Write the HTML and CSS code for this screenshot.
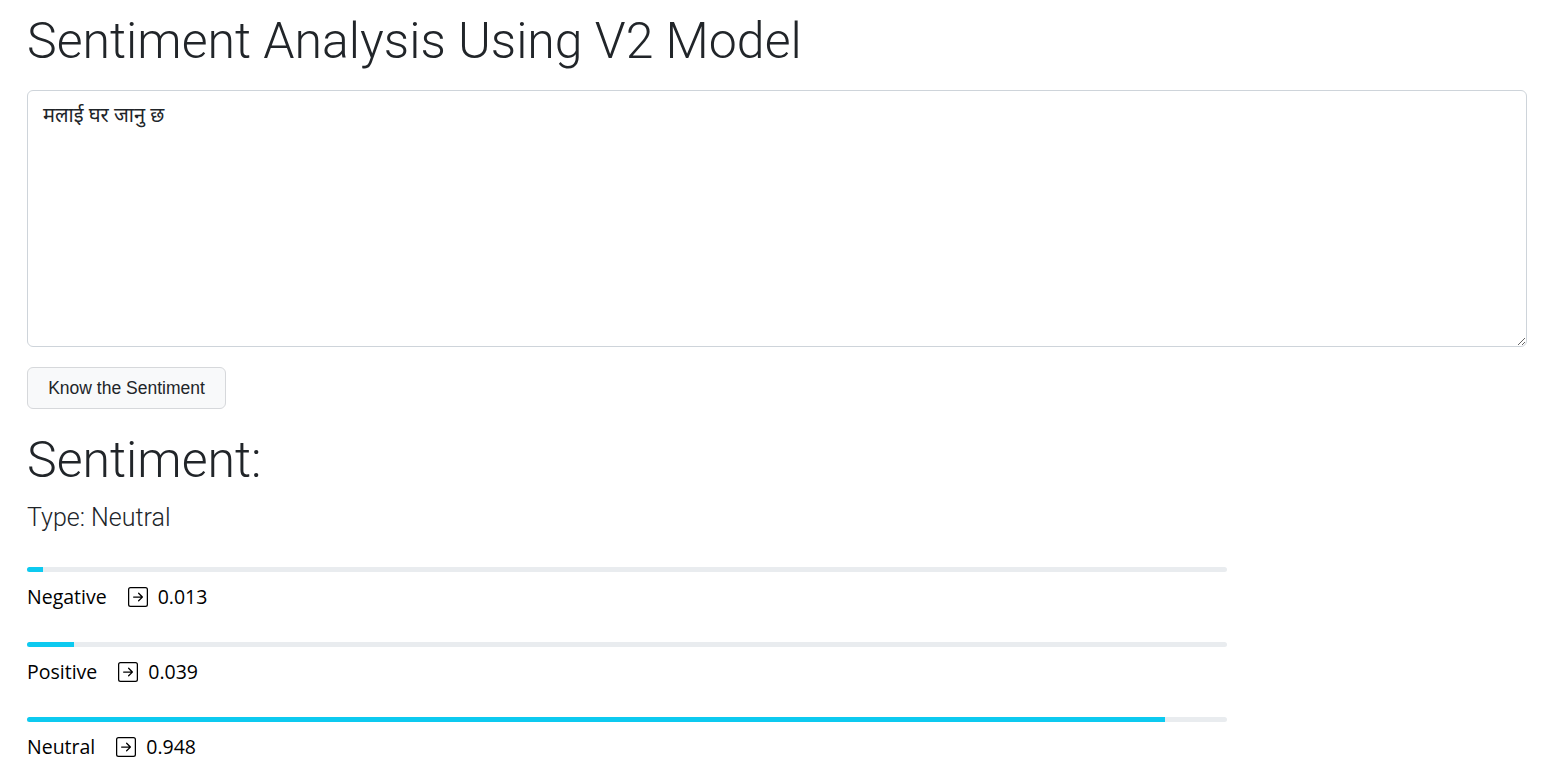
FILE: index.html
```html
<!DOCTYPE html>
<html>
<head>
<meta charset="utf-8">
<link rel="stylesheet" href="styles.css">
</head>
<body>
<div class="page">
  <h1 class="title">Sentiment Analysis Using V2 Model</h1>
  <textarea class="input">मलाई घर जानु छ</textarea>
  <div class="actions"><button class="btn">Know the Sentiment</button></div>
  <h2 class="result-title">Sentiment:</h2>
  <p class="lead">Type: Neutral</p>
  <div class="scores">
    <div class="score">
      <div class="bar"><div class="fill" style="width:1.3%"></div></div>
      <div class="label"><span class="name">Negative</span>
        <svg class="icon" viewBox="0 0 16 16"><path fill="currentColor" fill-rule="evenodd" d="M15 2a1 1 0 0 0-1-1H2a1 1 0 0 0-1 1v12a1 1 0 0 0 1 1h12a1 1 0 0 0 1-1V2zM0 2a2 2 0 0 1 2-2h12a2 2 0 0 1 2 2v12a2 2 0 0 1-2 2H2a2 2 0 0 1-2-2V2zm4.5 5.5a.5.5 0 0 0 0 1h5.793l-2.147 2.146a.5.5 0 0 0 .708.708l3-3a.5.5 0 0 0 0-.708l-3-3a.5.5 0 1 0-.708.708L10.293 7.5H4.5z"/></svg>
        <span class="val">0.013</span></div>
    </div>
    <div class="score">
      <div class="bar"><div class="fill" style="width:3.9%"></div></div>
      <div class="label"><span class="name">Positive</span>
        <svg class="icon" viewBox="0 0 16 16"><path fill="currentColor" fill-rule="evenodd" d="M15 2a1 1 0 0 0-1-1H2a1 1 0 0 0-1 1v12a1 1 0 0 0 1 1h12a1 1 0 0 0 1-1V2zM0 2a2 2 0 0 1 2-2h12a2 2 0 0 1 2 2v12a2 2 0 0 1-2 2H2a2 2 0 0 1-2-2V2zm4.5 5.5a.5.5 0 0 0 0 1h5.793l-2.147 2.146a.5.5 0 0 0 .708.708l3-3a.5.5 0 0 0 0-.708l-3-3a.5.5 0 1 0-.708.708L10.293 7.5H4.5z"/></svg>
        <span class="val">0.039</span></div>
    </div>
    <div class="score">
      <div class="bar"><div class="fill" style="width:94.8%"></div></div>
      <div class="label"><span class="name">Neutral</span>
        <svg class="icon" viewBox="0 0 16 16"><path fill="currentColor" fill-rule="evenodd" d="M15 2a1 1 0 0 0-1-1H2a1 1 0 0 0-1 1v12a1 1 0 0 0 1 1h12a1 1 0 0 0 1-1V2zM0 2a2 2 0 0 1 2-2h12a2 2 0 0 1 2 2v12a2 2 0 0 1-2 2H2a2 2 0 0 1-2-2V2zm4.5 5.5a.5.5 0 0 0 0 1h5.793l-2.147 2.146a.5.5 0 0 0 .708.708l3-3a.5.5 0 0 0 0-.708l-3-3a.5.5 0 1 0-.708.708L10.293 7.5H4.5z"/></svg>
        <span class="val">0.948</span></div>
    </div>
  </div>
</div>
</body>
</html>
```
FILE: styles.css
```css
* { box-sizing: border-box; }
html, body { margin: 0; padding: 0; background: #fff; }
body { font-family: Roboto, "Noto Sans", sans-serif; color: #212529; }
.page { padding: 0 26px 0 27px; display: flex; flex-direction: column; }
.title {
  font-family: Roboto, sans-serif; font-weight: 300; font-size: 50px;
  line-height: 1.2; margin: 11px 0 19px; color: #212529;
}
.input {
  display: block; width: 100%; height: 257px; resize: vertical;
  border: 1px solid #ced4da; border-radius: 6px; padding: 10px 15px;
  font-family: "Noto Sans", "Noto Sans Devanagari", sans-serif; font-size: 20px; line-height: 1.4;
  color: #212529; background: #fff; outline: none;
}
.actions { margin-top: 20px; }
.btn {
  font-family: "Liberation Sans", Arial, sans-serif; font-size: 17.5px; color: #212529;
  background: #f8f9fa; border: 1px solid #d6d8db; border-radius: 6px;
  height: 42px; padding: 0; width: 199px;
}
.result-title {
  font-family: Roboto, sans-serif; font-weight: 300; font-size: 50px; line-height: 1.2;
  margin: 21px 0 0;
}
.lead { font-family: Roboto, sans-serif; font-weight: 300; font-size: 25px; margin: 9px 0 0; line-height: 1.5; }
.scores { width: 1200px; margin-top: 30px; display: flex; flex-direction: column; gap: 20px; }
.score { display: flex; flex-direction: column; }
.bar { height: 5px; background: #e9ecef; border-radius: 3px; overflow: hidden; }
.fill { height: 100%; background: #0dcaf0; }
.label {
  display: flex; align-items: center; height: 50px;
  font-family: "Open Sans", "Noto Sans", sans-serif; font-size: 19.5px; color: #000;
}
.icon { width: 20px; height: 20px; margin: 0 10px 0 21px; color: #000; }
```
